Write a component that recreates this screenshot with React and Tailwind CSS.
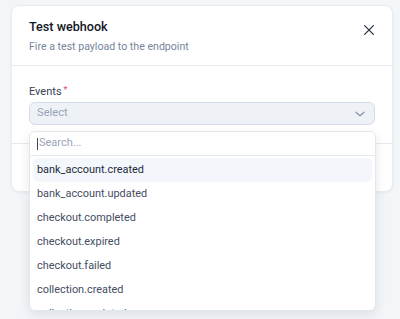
import React from "react";

const events = [
  "bank_account.created",
  "bank_account.updated",
  "checkout.completed",
  "checkout.expired",
  "checkout.failed",
  "collection.created",
  "collection.updated",
];

export default function App() {
  return (
    <div
      className="w-[400px] h-[319px] overflow-hidden bg-[#f3f6f9] pt-[5px] pl-[11px] pr-[7px]"
      style={{ fontFamily: "Roboto, 'Noto Sans', sans-serif" }}
    >
      <div className="relative w-[382px] rounded-[8px] bg-white border border-[#e8edf3] shadow-[0_1px_3px_rgba(15,23,42,0.06)]">
        <div className="flex items-start justify-between border-b border-[#e6ebf1] pl-[17px] pr-[17px] pt-[12px] h-[60px]">
          <div>
            <div className="text-[12.6px] leading-[17px] font-medium text-[#111726]">Test webhook</div>
            <div className="mt-[5px] text-[10.6px] leading-[14px] text-[#76849b]">Fire a test payload to the endpoint</div>
          </div>
          <svg width="12" height="12" viewBox="0 0 12 12" className="mt-[6px]" fill="none" stroke="#2a3447" strokeWidth="1.3" strokeLinecap="round">
            <path d="M1.6 1.6L10.4 10.4M10.4 1.6L1.6 10.4" />
          </svg>
        </div>
        <div className="px-[17px] pt-[19px] pb-[18px] border-b border-[#e6ebf1]">
          <div className="flex items-center text-[11px] leading-[14px] text-[#364153]">
            Events<span className="ml-[2px] -mt-[4px] text-[9px] text-[#e5484d]">*</span>
          </div>
          <div className="mt-[3px] flex h-[23px] items-center justify-between rounded-[6px] border border-[#d5dce7] bg-[#eef2f7] pl-[7px] pr-[9px]">
            <span className="text-[11.2px] text-[#98a4b6]">Select</span>
            <svg width="10" height="10" viewBox="0 0 10 10" fill="none" stroke="#8593a8" strokeWidth="1.2" strokeLinecap="round" strokeLinejoin="round">
              <path d="M1 3.2L5 6.8L9 3.2" />
            </svg>
          </div>
        </div>
        <div className="h-[47px]" />

        <div className="absolute left-[17px] top-[125px] w-[347px] h-[180px] overflow-hidden rounded-[6px] border border-[#e3e8ef] bg-white shadow-[0_4px_12px_rgba(15,23,42,0.10)]">
          <div className="flex h-[24px] items-center border-b border-[#e6ebf1] pl-[7px]">
            <span className="mr-[1px] h-[12px] w-[1px] bg-[#3b4658]" />
            <span className="text-[11px] text-[#98a4b6]">Search...</span>
          </div>
          <div className="px-[3px] pt-[2px]">
            {events.map((e, i) => (
              <div
                key={e}
                className={
                  i === 0
                    ? "flex h-[24px] items-center rounded-[5px] bg-[#f3f6fa] px-[4px] text-[10.9px] text-[#222b3c]"
                    : "flex h-[24px] items-center rounded-[5px] px-[4px] text-[10.9px] text-[#434d5f]"
                }
              >
                {e}
              </div>
            ))}
          </div>
        </div>
      </div>
    </div>
  );
}
